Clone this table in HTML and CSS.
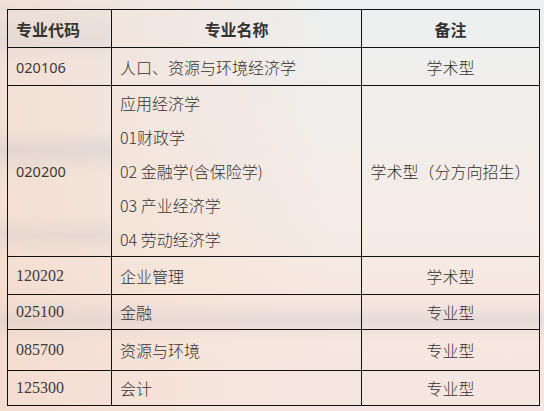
FILE: index.html
```html
<!DOCTYPE html>
<html lang="zh">
<head>
<meta charset="utf-8">
<title>专业目录</title>
<link rel="stylesheet" href="styles.css">
</head>
<body>
<div class="page">
  <table class="majors">
    <colgroup>
      <col class="c-code">
      <col class="c-name">
      <col class="c-note">
    </colgroup>
    <thead>
      <tr class="r-head">
        <th class="left">专业代码</th>
        <th>专业名称</th>
        <th>备注</th>
      </tr>
    </thead>
    <tbody>
      <tr class="r-38">
        <td class="code">020106</td>
        <td>人口、资源与环境经济学</td>
        <td class="note">学术型</td>
      </tr>
      <tr class="r-multi">
        <td class="code">020200</td>
        <td class="list">
          <p>应用经济学</p>
          <p>01财政学</p>
          <p>02 金融学(含保险学)</p>
          <p>03 产业经济学</p>
          <p>04 劳动经济学</p>
        </td>
        <td class="note">学术型（分方向招生）</td>
      </tr>
      <tr class="r-38">
        <td class="code serif">120202</td>
        <td>企业管理</td>
        <td class="note">学术型</td>
      </tr>
      <tr class="r-35">
        <td class="code serif">025100</td>
        <td>金融</td>
        <td class="note">专业型</td>
      </tr>
      <tr class="r-41">
        <td class="code serif">085700</td>
        <td>资源与环境</td>
        <td class="note">专业型</td>
      </tr>
      <tr class="r-35">
        <td class="code serif">125300</td>
        <td>会计</td>
        <td class="note">专业型</td>
      </tr>
    </tbody>
  </table>
</div>
</body>
</html>
```
FILE: styles.css
```css
html, body {
  margin: 0;
  padding: 0;
}
body {
  width: 544px;
  height: 411px;
  overflow: hidden;
  font-family: "Noto Sans CJK SC", "Noto Sans", sans-serif;
  color: #333;
  background:
    linear-gradient(180deg, rgba(200,200,205,0) 0, rgba(200,200,205,0.25) 40px, rgba(200,200,205,0) 60px, rgba(200,200,205,0) 130px, rgba(190,190,195,0.3) 150px, rgba(200,200,205,0) 175px, rgba(200,200,205,0) 215px, rgba(190,190,195,0.25) 235px, rgba(200,200,205,0) 255px) 0 0 / 110px 260px no-repeat,
    linear-gradient(180deg, rgba(200,200,205,0) 0, rgba(180,180,190,0.22) 20px, rgba(200,200,205,0) 40px) 0 300px / 544px 111px no-repeat,
    linear-gradient(90deg, rgba(243,214,198,0.6) 0, rgba(245,226,214,0.5) 190px, rgba(238,240,240,0) 330px),
    linear-gradient(180deg, #eceff0 0, #f1eeeb 120px, #f5ebe4 250px, #f7e7df 300px, #f5e6e1 411px);
}
.page {
  padding: 9px 0 0 7px;
}
.majors {
  border-collapse: collapse;
  width: 532px;
  table-layout: fixed;
  font-size: 16px;
  font-weight: 300;
}
.c-code { width: 104px; }
.c-name { width: 250px; }
.c-note { width: 178px; }
.majors th,
.majors td {
  border: 1px solid #111;
  padding: 0 8px;
  vertical-align: middle;
}
.majors th {
  font-weight: bold;
  text-align: center;
  color: #333;
}
.majors th.left { text-align: left; }
.r-head { height: 38px; }
.r-38 { height: 38px; }
.r-35 { height: 35px; }
.r-41 { height: 41px; }
.r-multi { height: 171px; }
.code {
  font-family: "Noto Sans", "Liberation Sans", sans-serif;
  font-size: 14.5px;
  font-weight: normal;
  color: #3a3a3a;
}
.code.serif {
  font-family: "Liberation Serif", serif;
  font-size: 16px;
}
.note { text-align: center; }
.list p {
  margin: 0;
  line-height: 34px;
}
```
